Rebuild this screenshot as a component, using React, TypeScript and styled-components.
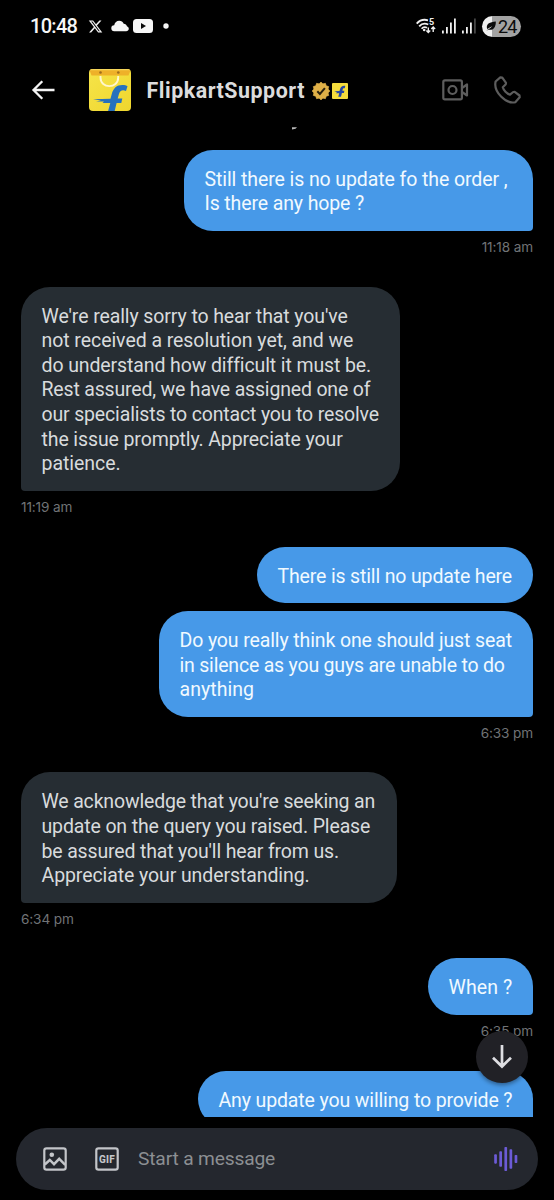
import React from "react";
import styled, { createGlobalStyle } from "styled-components";

const GlobalStyle = createGlobalStyle`
  * { box-sizing: border-box; }
  body { margin: 0; background: #000; font-family: Roboto, "Liberation Sans", sans-serif; }
  svg { display: block; flex: none; }
`;

const Screen = styled.main`
  width: 554px;
  height: 1200px;
  display: flex;
  flex-direction: column;
  background: #000;
  overflow: hidden;
`;

const StatusBar = styled.div`
  height: 52px;
  padding: 0 33px 0 30px;
  display: flex;
  align-items: center;
  justify-content: space-between;
  flex: none;
`;

const StatusGroup = styled.div<{ $gap: number }>`
  display: flex;
  align-items: center;
  gap: ${(p) => p.$gap}px;
`;

const Clock = styled.span`
  width: 54px;
  font-size: 20px;
  line-height: 24px;
  font-weight: 500;
  letter-spacing: -0.7px;
  color: #f6f6f6;
`;

const Battery = styled.span`
  width: 39px;
  height: 21px;
  padding-left: 4px;
  display: flex;
  align-items: center;
  gap: 2px;
  border-radius: 11px;
  background: linear-gradient(90deg, #f0f0f0 0 10px, #a3a3a3 10px);
  color: #0c0c0c;
  font-size: 18px;
  line-height: 21px;
  letter-spacing: -0.9px;
  font-weight: 400;
`;

const Header = styled.header`
  height: 75px;
  padding: 1px 33px 0 30.5px;
  display: flex;
  align-items: center;
  flex: none;
`;

const Avatar = styled.div`
  width: 42px;
  height: 42px;
  margin-left: 34px;
`;

const Title = styled.h1`
  width: 159px;
  margin: 1px 6px 0 16px;
  font-size: 21.4px;
  line-height: 26px;
  font-weight: 700;
  letter-spacing: 0.53px;
  white-space: nowrap;
  color: #dcdcdd;
`;

const Badges = styled.div`
  display: flex;
  align-items: center;
  gap: 2px;
  margin-top: 2px;
`;

const CallActions = styled.div`
  display: flex;
  align-items: center;
  gap: 25px;
  margin-left: auto;
`;

const Thread = styled.section`
  height: 990px;
  flex: none;
  padding: 0 21px;
  display: flex;
  flex-direction: column;
  overflow: hidden;
`;

const ScrolledRemnant = styled.svg`
  margin: 0 0 19.8px 270px;
`;

const Bubble = styled.div<{ $mine: boolean; $w: number; $last: boolean }>`
  flex: none;
  width: ${(p) => p.$w}px;
  align-self: ${(p) => (p.$mine ? "flex-end" : "flex-start")};
  padding: 18px 0 14px 20.5px;
  border-radius: ${(p) =>
    !p.$last ? "29px" : p.$mine ? "29px 29px 4px 29px" : "29px 29px 29px 4px"};
  background: ${(p) => (p.$mine ? "#4799e8" : "#262d33")};
  color: ${(p) => (p.$mine ? "#f1f9ff" : "#d8dbdd")};
  font-size: 19.5px;
  line-height: 24.6px;
  & + & { margin-top: 7.8px; }
`;

const Line = styled.div<{ $track: number }>`
  letter-spacing: ${(p) => p.$track}px;
  white-space: nowrap;
`;

const Time = styled.time<{ $mine: boolean }>`
  flex: none;
  height: 17px;
  margin: 8px 0 30.7px;
  align-self: ${(p) => (p.$mine ? "flex-end" : "flex-start")};
  font-family: Inter, Roboto, sans-serif;
  font-size: 13.6px;
  line-height: 17px;
  letter-spacing: -0.12px;
  color: #707376;
`;

const Footer = styled.footer`
  position: relative;
  flex: 1;
  padding: 10.5px 16px 11px;
`;

const JumpButton = styled.button`
  position: absolute;
  top: -86px;
  right: 26px;
  width: 52px;
  height: 52px;
  padding: 0;
  border: 0;
  border-radius: 50%;
  display: flex;
  align-items: center;
  justify-content: center;
  background: #212126;
  box-shadow: 0 2px 4px rgba(0, 0, 0, 0.4);
`;

const Composer = styled.div`
  height: 62px;
  border-radius: 31px;
  padding: 0 20px 0 27px;
  display: flex;
  align-items: center;
  background: #24272e;
`;

const ComposerIcons = styled.div`
  display: flex;
  gap: 28px;
`;

const Placeholder = styled.span`
  flex: 1;
  margin-left: 19px;
  font-size: 19.2px;
  line-height: 24px;
  letter-spacing: -0.16px;
  color: #8c8f93;
`;

type Text = [string, number];
type Entry = { mine: boolean; time: string; bubbles: { w: number; lines: Text[] }[] };

const entries: Entry[] = [
  {
    mine: true,
    time: "11:18 am",
    bubbles: [{ w: 349, lines: [["Still there is no update fo the order ,", -0.09], ["Is there any hope ?", -0.12]] }],
  },
  {
    mine: false,
    time: "11:19 am",
    bubbles: [
      {
        w: 379,
        lines: [
          ["We're really sorry to hear that you've", -0.1],
          ["not received a resolution yet, and we", -0.06],
          ["do understand how difficult it must be.", -0.11],
          ["Rest assured, we have assigned one of", -0.18],
          ["our specialists to contact you to resolve", -0.16],
          ["the issue promptly. Appreciate your", -0.11],
          ["patience.", -0.05],
        ],
      },
    ],
  },
  {
    mine: true,
    time: "6:33 pm",
    bubbles: [
      { w: 276, lines: [["There is still no update here", -0.15]] },
      {
        w: 374,
        lines: [
          ["Do you really think one should just seat", -0.12],
          ["in silence as you guys are unable to do", -0.2],
          ["anything", 0.05],
        ],
      },
    ],
  },
  {
    mine: false,
    time: "6:34 pm",
    bubbles: [
      {
        w: 375.5,
        lines: [
          ["We acknowledge that you're seeking an", -0.17],
          ["update on the query you raised. Please", -0.14],
          ["be assured that you'll hear from us.", -0.16],
          ["Appreciate your understanding.", -0.09],
        ],
      },
    ],
  },
  { mine: true, time: "6:35 pm", bubbles: [{ w: 105, lines: [["When ?", 0.1]] }] },
  { mine: true, time: "", bubbles: [{ w: 335, lines: [["Any update you willing to provide ?", -0.13]] }] },
];

const XLogo = () => (
  <svg width="15" height="15" viewBox="0 0 24 24" fill="#f2f2f2">
    <path d="M18.244 2.25h3.308l-7.227 8.26 8.502 11.24H16.17l-5.214-6.817L4.99 21.75H1.68l7.73-8.835L1.254 2.25H8.08l4.713 6.231zm-1.161 17.52h1.833L7.084 4.126H5.117z" />
  </svg>
);

const Cloud = () => (
  <svg width="18" height="12" viewBox="0 0 18 12" fill="#f6f6f6">
    <path d="M3.4 11.2a3 3 0 0 1-.2-6C3.8 2.4 5.7.7 8.2.7c2.1 0 3.8 1.2 4.5 3.1 1.8 0 2.9.9 3.2 2.4 1.2.4 1.9 1.3 1.9 2.5 0 1.5-1.2 2.500-2.700 2.500z" />
  </svg>
);

const PlayLogo = () => (
  <svg width="20" height="14" viewBox="0 0 20 14">
    <rect width="20" height="14" rx="3.5" fill="#f6f6f6" />
    <path d="M8 4v6l5-3z" fill="#080808" />
  </svg>
);

const MoreDot = () => (
  <svg width="20" height="6" viewBox="0 0 20 6">
    <circle cx="9" cy="3" r="2.7" fill="#f6f6f6" />
  </svg>
);

const Wifi = () => (
  <svg width="20" height="16" viewBox="0 0 20 16" fill="none" stroke="#f0f0f0">
    <path d="M.7 5.6C3.5 2.5 8 1.2 12 2.3" strokeWidth="1.9" />
    <path d="M3.2 8.3C5.5 5.7 9 5 12.3 6.5" strokeWidth="1.9" />
    <path d="M5.6 10.8C7 9.1 9.2 8.8 11 9.7" strokeWidth="1.8" />
    <circle cx="8.2" cy="12" r="1.3" fill="#f0f0f0" stroke="none" />
    <path d="M12.3 9.5v5M10.4 12.6l1.9 2 1.9-2M17.2 14V9M15.3 11l1.9-2 1.9 2" strokeWidth="1.4" />
    <text x="13" y="7.4" fill="#f0f0f0" stroke="none" fontSize="9" fontWeight="700">5</text>
  </svg>
);

const Signal = ({ weak = false }: { weak?: boolean }) => (
  <svg width="14" height="16" viewBox="0 0 14 16" fill="#f0f0f0">
    <rect x="0" y="12.5" width="1.8" height="3" />
    <rect x="4" y="9" width="1.8" height="6.5" />
    <rect x="8" y="4.5" width="1.8" height="11" />
    <rect x="12" y="0.5" width="1.8" height="15" fill={weak ? "#464646" : "#f0f0f0"} />
  </svg>
);

const Leaf = () => (
  <svg width="10" height="10" viewBox="0 0 10 10">
    <path d="M.3 9.500C2 8.600 4.200 7.500 6.200 5 4 6.600 2.500 7.200 1.200 8-.2 4.200 2.200 1.200 9.800.6 10 6 7.200 9.600 2.800 8.700z" fill="#0c0c0c" />
  </svg>
);

const BackArrow = () => (
  <svg width="24" height="20" viewBox="0 0 24 20" fill="none" stroke="#f4f4f4" strokeWidth="2.3">
    <path d="M2.5 10H23.5M11.3 1.2L2.5 10l8.8 8.8" />
  </svg>
);

const Bag = () => (
  <svg width="42" height="42" viewBox="0 0 42 42">
    <defs>
      <linearGradient id="bag" x1="0" y1="0" x2="1" y2="1">
        <stop offset="0" stopColor="#f6e449" />
        <stop offset="1" stopColor="#efd62e" />
      </linearGradient>
      <clipPath id="bagClip"><rect width="42" height="42" rx="4" /></clipPath>
    </defs>
    <g clipPath="url(#bagClip)">
      <rect width="42" height="42" fill="url(#bag)" />
      <path d="M0 0H42L39.5 6.5H2.5z" fill="#eeb129" />
      <path d="M0 0H42V1.3H0z" fill="#f5d55a" />
      <path d="M11.5 7v1.5c0 11.5 17.7 11.5 17.7 0V7" fill="none" stroke="#fff6cc" strokeWidth="1.9" />
      <circle cx="11.5" cy="3.5" r="1.3" fill="#9d6c1c" />
      <circle cx="29.3" cy="3.5" r="1.3" fill="#9d6c1c" />
      <path d="M4 30.3l17.5-.5 1.2-4.5c1.6-6.2 5-9.3 10.6-9.3 2.3 0 4.2.5 5.2 1.2l-1.5 4.700c-3.700-1.300-6.100-.4-7.100 3.400l-1.200 4.300h4.600l-1 4.400h-4.700L25.700 42h-6.600l2.200-8H13.500l1.500-1.500H7l5-1z" fill="#2671bd" />
    </g>
  </svg>
);

const Verified = () => {
  const points = Array.from({ length: 24 }, (_, i) => {
    const r = i % 2 ? 7.4 : 8.9;
    const a = (i * Math.PI) / 12;
    return `${9 + r * Math.sin(a)},${9 - r * Math.cos(a)}`;
  }).join(" ");
  return (
    <svg width="18" height="18" viewBox="0 0 18 18">
      <polygon points={points} fill="#dfb047" stroke="#dfb047" strokeWidth=".6" strokeLinejoin="round" />
      <path d="M5.3 9.2l2.6 2.7 5-5.7" fill="none" stroke="#2a210d" strokeWidth="2" />
    </svg>
  );
};

const Affiliate = () => (
  <svg width="16" height="16" viewBox="0 0 16 16">
    <rect width="16" height="16" rx="1" fill="#f5dc3c" />
    <path d="M2.2 8.2l5.300-.2.300-1.100C8.600 3.900 10.200 2.600 13.300 2.900l-.6 2.400c-1.300-.1-1.800.3-2.100 1.600l-.2.900h2l-.5 2.200H9.900L9 13.800H6.300l.9-3.600H3.800l1.200-.9z" fill="#2547a4" />
  </svg>
);

const Video = () => (
  <svg width="27" height="22" viewBox="0 0 27 22" fill="none" stroke="#5d5d5d" strokeWidth="2.2" strokeLinejoin="round">
    <rect x="1.3" y="1.3" width="18.6" height="19" rx="1.6" />
    <circle cx="10.5" cy="11" r="4" />
    <path d="M20 9l5-3.500v11L20 13" />
  </svg>
);

const Phone = () => (
  <svg width="27" height="28" viewBox="0 0 27 28" fill="none" stroke="#5d5d5d" strokeWidth="2.2" strokeLinejoin="round">
    <path d="M1.600 5.500L6.300 1.400 8.300 1.600 12 6.800 11.800 8.200 8.800 11.300C9.500 14.200 12.800 17.800 16 18.700L19.200 16 20.700 15.900 25.500 19.500 25.700 21.300 21.300 26.200C12 28.300-.8 16 1.600 5.500Z" />
  </svg>
);

const DownArrow = () => (
  <svg width="20" height="24" viewBox="0 0 20 24" fill="none" stroke="#dedee2" strokeWidth="2.7">
    <path d="M10 0v21.500M1 12.700l9 8.800 9-8.800" />
  </svg>
);

const Picture = () => (
  <svg width="24" height="24" viewBox="0 0 24 24" fill="none" stroke="#c3c5c9" strokeWidth="2.2">
    <rect x="1.3" y="1.3" width="21.4" height="21.4" rx="2.2" />
    <circle cx="8.8" cy="7.7" r="2.3" fill="#c3c5c9" stroke="none" />
    <path d="M1.800 17.500l5-4.500 4.200 4.200 5.200-5.400 6 6" strokeWidth="2.4" />
  </svg>
);

const Gif = () => (
  <svg width="24" height="24" viewBox="0 0 24 24">
    <rect x="1.3" y="1.3" width="21.4" height="21.4" rx="2.2" fill="none" stroke="#c3c5c9" strokeWidth="2.2" />
    <text x="12" y="15.7" textAnchor="middle" fill="#c3c5c9" fontSize="10" fontWeight="800" letterSpacing=".2">GIF</text>
  </svg>
);

const VoiceWave = () => (
  <svg width="24" height="26" viewBox="0 0 24 26" fill="#6c5bd6">
    {[9.3, 15.5, 24, 19.5, 8].map((h, i) => (
      <rect key={i} x={0.2 + i * 5.1} y={13 - h / 2} width="2.7" height={h} rx=".8" />
    ))}
  </svg>
);

export default function App() {
  return (
    <Screen>
      <GlobalStyle />
      <StatusBar>
        <StatusGroup $gap={4}>
          <Clock>10:48</Clock>
          <XLogo />
          <StatusGroup $gap={4}>
            <svg width="0" height="1" />
            <Cloud />
            <PlayLogo />
            <MoreDot />
          </StatusGroup>
        </StatusGroup>
        <StatusGroup $gap={6}>
          <Wifi />
          <Signal />
          <Signal weak />
          <Battery><Leaf />24</Battery>
        </StatusGroup>
      </StatusBar>
      <Header>
        <BackArrow />
        <Avatar><Bag /></Avatar>
        <Title>FlipkartSupport</Title>
        <Badges><Verified /><Affiliate /></Badges>
        <CallActions><Video /><Phone /></CallActions>
      </Header>
      <Thread>
        <ScrolledRemnant width="8" height="3" viewBox="0 0 8 3">
          <path d="M1 .3H6L4.500 1.800 1 2.400z" fill="#b9b9b9" />
        </ScrolledRemnant>
        {entries.map((e, i) => (
          <React.Fragment key={i}>
            {e.bubbles.map((b, j) => (
              <Bubble key={j} $mine={e.mine} $w={b.w} $last={j === e.bubbles.length - 1}>
                {b.lines.map(([text, track]) => (
                  <Line key={text} $track={track}>{text}</Line>
                ))}
              </Bubble>
            ))}
            {e.time && <Time $mine={e.mine}>{e.time}</Time>}
          </React.Fragment>
        ))}
      </Thread>
      <Footer>
        <JumpButton aria-label="Jump to latest"><DownArrow /></JumpButton>
        <Composer>
          <ComposerIcons><Picture /><Gif /></ComposerIcons>
          <Placeholder>Start a message</Placeholder>
          <VoiceWave />
        </Composer>
      </Footer>
    </Screen>
  );
}
